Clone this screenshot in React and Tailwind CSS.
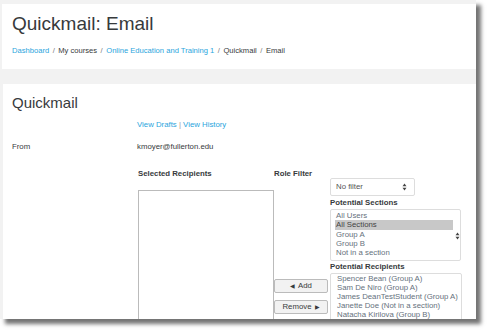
import React from "react";

const UpDown = ({ className = "" }) => (
  <svg width="5" height="8" viewBox="0 0 5 8" className={className}>
    <path d="M2.5 0.5 L4.5 3.2 L0.5 3.2 Z" fill="#444" />
    <path d="M2.5 7.5 L4.5 4.8 L0.5 4.8 Z" fill="#444" />
  </svg>
);

export default function App() {
  const font = { fontFamily: '"Liberation Sans", Arial, sans-serif' };
  return (
    <div className="w-[489px] h-[332px] bg-white" style={font}>
      <div className="w-[476px] h-[319px] bg-[#f2f2f2] overflow-hidden shadow-[5px_5px_4px_rgba(0,0,0,0.55)] pt-[4px] text-[#373a3c]">
        {/* header card */}
        <div className="ml-[2px] h-[65px] bg-white pl-[10px] pt-[9px]">
          <h1 className="text-[19px] leading-[22px] font-normal text-[#373a3c]">Quickmail: Email</h1>
          <div className="mt-[11px] text-[7.6px] leading-[10px] flex gap-[3.5px]">
            <span className="text-[#2aa5dd]">Dashboard</span>
            <span className="text-[#777]">/</span>
            <span>My courses</span>
            <span className="text-[#777]">/</span>
            <span className="text-[#2aa5dd]">Online Education and Training 1</span>
            <span className="text-[#777]">/</span>
            <span>Quickmail</span>
            <span className="text-[#777]">/</span>
            <span>Email</span>
          </div>
        </div>
        {/* main card */}
        <div className="ml-[3px] mt-[15px] h-[240px] bg-white pl-[9px] pt-[10px]">
          <h2 className="text-[15px] leading-[18px] font-normal">Quickmail</h2>
          <div className="flex mt-[8px] text-[7.8px] leading-[10px]">
            <div className="w-[125px]" />
            <div className="text-[#2aa5dd]">
              View Drafts <span className="text-[#999]">|</span> View History
            </div>
          </div>
          <div className="flex mt-[12px] text-[7.8px] leading-[10px]">
            <div className="w-[125px]">From</div>
            <div>kmoyer@fullerton.edu</div>
          </div>
          <div className="flex mt-[17px] text-[7.8px] leading-[10px]">
            <div className="w-[126px]" />
            <div className="w-[136px] flex flex-col">
              <div className="font-bold h-[10px]">Selected Recipients</div>
              <div className="mt-[11px] h-[140px] border border-[#bbb] bg-white" />
            </div>
            <div className="w-[56px] flex flex-col">
              <div className="font-bold h-[10px]">Role Filter</div>
              <div className="mt-[100px] w-[54px] h-[14px] border border-[#bbb] rounded-[2px] bg-[#f2f2f2] flex items-center justify-center gap-[3px]">
                <span className="text-[6px]">◀</span>
                <span>Add</span>
              </div>
              <div className="mt-[7px] w-[54px] h-[14px] border border-[#bbb] rounded-[2px] bg-[#f2f2f2] flex items-center justify-center gap-[3px]">
                <span>Remove</span>
                <span className="text-[6px]">▶</span>
              </div>
            </div>
            <div className="w-[132px] flex flex-col pt-[9px]">
              <div className="w-[85px] h-[18px] border border-[#ddd] rounded-[2px] flex items-center justify-between pl-[5px] pr-[7px] text-[#555]">
                <span>No filter</span>
                <UpDown />
              </div>
              <div className="font-bold mt-[2px] h-[10px]">Potential Sections</div>
              <div className="mt-[1px] w-[131px] h-[52px] border border-[#ddd] rounded-[2px] pl-[4px] pt-[1px] flex text-[#66717d] leading-[9.25px]">
                <div className="flex flex-col w-[118px] pl-[1px]">
                  <span>All Users</span>
                  <span className="bg-[#c8c8c8] text-[#444] -ml-[1px] pl-[1px]">All Sections</span>
                  <span>Group A</span>
                  <span>Group B</span>
                  <span>Not in a section</span>
                </div>
                <div className="flex items-center pl-[2px]">
                  <UpDown />
                </div>
              </div>
              <div className="font-bold mt-[1px] h-[10px]">Potential Recipients</div>
              <div className="mt-[1px] w-[132px] h-[60px] border border-[#ddd] rounded-[2px] pl-[6px] flex flex-col text-[#66717d] leading-[9.1px]">
                <span>Spencer Bean (Group A)</span>
                <span>Sam De Niro (Group A)</span>
                <span>James DeanTestStudent (Group A)</span>
                <span>Janette Doe (Not in a section)</span>
                <span>Natacha Kirilova (Group B)</span>
              </div>
            </div>
          </div>
        </div>
      </div>
    </div>
  );
}
